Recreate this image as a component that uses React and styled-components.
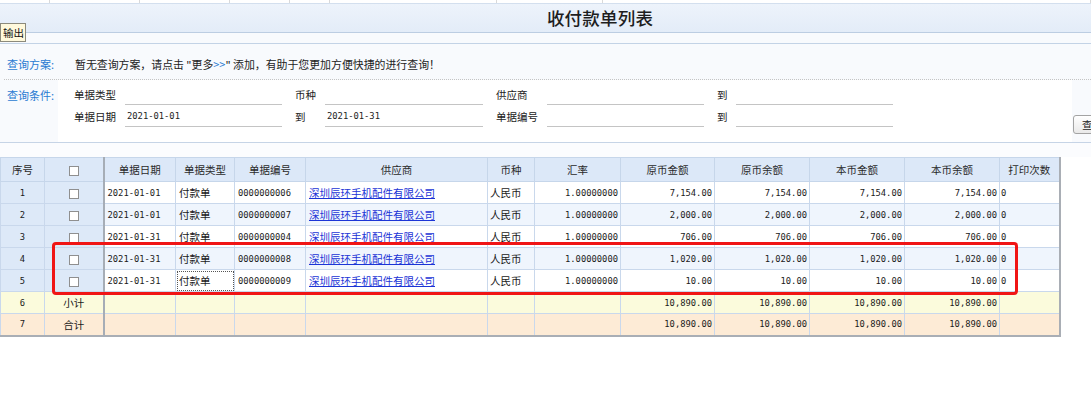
import React from "react";
import styled, { createGlobalStyle } from "styled-components";

const CJK = `"Noto Sans CJK SC", "Noto Sans", sans-serif`;
const MONO = `"DejaVu Sans Mono", "Liberation Mono", "Noto Sans CJK SC", monospace`;

const Global = createGlobalStyle`
  html, body { margin: 0; padding: 0; background: #fff; overflow: hidden; }
  body { font-family: ${CJK}; font-size: 10.5px; color: #222; }
  * { box-sizing: border-box; }
`;

const Page = styled.div`
  width: 1091px;
  height: 395px;
  overflow: hidden;
  background: #fff;
`;

const TabStrip = styled.div`
  display: flex;
  height: 4px;
  border-bottom: 1px solid #d3dfee;
`;

const TabStub = styled.div`
  width: ${(p) => p.$w}px;
  border-right: 1px solid #d9d9d9;
`;

const TitleBar = styled.div`
  height: 29px;
  background: linear-gradient(#edf3fb, #e3ecf8);
  border-bottom: 1px solid #bccde2;
  padding-left: 109px;
  text-align: center;
`;

const Title = styled.h1`
  margin: 0;
  font-size: 17.5px;
  font-weight: 500;
  line-height: 28px;
  color: #1e1e1e;
  letter-spacing: 0.2px;
`;

const Toolbar = styled.div`
  position: relative;
  height: 11px;
  background: #f8fafd;
  border-bottom: 1px solid #c3d3e6;
`;

const ExportButton = styled.button`
  position: absolute;
  left: 0;
  top: -10px;
  height: 19px;
  width: 26px;
  padding: 0 0 0 2px;
  font-family: ${CJK};
  font-size: 10.5px;
  line-height: 17px;
  text-align: left;
  color: #111;
  background: #fff9dc;
  border: 1px solid #8c8a7c;
  border-radius: 0;
`;

const QueryPanel = styled.div`
  background: #f8fafd;
  border-bottom: 1px solid #c6d4e6;
`;

const SchemeRow = styled.div`
  display: flex;
  height: 35px;
  padding-top: 13px;
  line-height: 14px;
`;

const SectionLabel = styled.div`
  width: 58px;
  flex: none;
  padding-left: 7px;
  font-size: 11px;
  color: #2a7ad2;
  line-height: 14px;
`;

const Hint = styled.div`
  padding-left: 17px;
  font-size: 10.9px;
  color: #222;
`;

const Arrow = styled.span`
  color: #2a7ad2;
`;

const Dotted = styled.div`
  margin-left: 4px;
  border-top: 1px dotted #c4c4c4;
`;

const ConditionRow = styled.div`
  display: flex;
  height: 62px;
  ${SectionLabel} {
    padding-top: 8px;
  }
`;

const FormBox = styled.div`
  width: 1014px;
  flex: none;
  background: #fff;
  padding: 4px 0 0 16px;
`;

const FieldGrid = styled.div`
  display: grid;
  grid-template-columns: 51px 157px 43px 158px 64px 157px 32px 157px;
  grid-auto-rows: 21px;
  row-gap: 1px;
`;

const FieldLabel = styled.div`
  padding-left: ${(p) => (p.$indent ? 13 : 0)}px;
  line-height: 21px;
  color: #222;
  white-space: nowrap;
`;

const FieldInput = styled.div`
  border-bottom: 1px solid #c4c4c4;
  padding-left: 2px;
  font-family: ${MONO};
  font-size: 8.8px;
  line-height: 20px;
  color: #222;
`;

const ButtonSlot = styled.div`
  flex: 1;
  padding: 35px 0 0 1px;
`;

const QueryButton = styled.button`
  height: 19px;
  width: 52px;
  font-family: ${CJK};
  font-size: 10.5px;
  padding: 0 0 0 8px;
  text-align: left;
  color: #222;
  background: linear-gradient(#ffffff, #e9e9e9);
  border: 1px solid #a3a3a3;
  border-radius: 3px;
`;

const Gap = styled.div`
  height: 14px;
  background: #fbfcfe;
`;

const TableWrap = styled.div`
  position: relative;
  width: 1059px;
`;

const Grid = styled.table`
  width: 1059px;
  table-layout: fixed;
  border-collapse: collapse;
  border-right: 2px solid #a9aeb5;
  border-bottom: 2px solid #a9aeb5;
`;

const bgFor = (kind, frozen) => {
  if (kind === "sub") return "#fbfbdc";
  if (kind === "total") return "#fdebd6";
  if (frozen) return "#dde9f8";
  if (kind === "even") return "#eff5fd";
  return "#ffffff";
};

const Th = styled.th`
  height: 24px;
  padding: 0;
  font-weight: normal;
  font-size: 10.5px;
  color: #2a2a2a;
  background: #dce8f8;
  border: 1px solid #c6d6ea;
  border-right: ${(p) => (p.$divider ? "2px solid #a6adb6" : "1px solid #c6d6ea")};
  text-align: center;
  white-space: nowrap;
`;

const Td = styled.td`
  height: 22px;
  padding: 0 2px 0 ${(p) => (p.$align === "left" ? p.$pl ?? 3 : 2)}px;
  background: ${(p) => bgFor(p.$kind, p.$frozen)};
  border: 1px solid #c9d8ec;
  border-right: ${(p) => (p.$divider ? "2px solid #a6adb6" : "1px solid #c9d8ec")};
  text-align: ${(p) => p.$align || "left"};
  font-family: ${(p) => (p.$mono ? MONO : CJK)};
  font-size: ${(p) => (p.$mono ? "8.8px" : "10.5px")};
  color: #1a1a1a;
  white-space: nowrap;
  overflow: hidden;
  outline: ${(p) => (p.$focus ? "1px dotted #555" : "none")};
  outline-offset: -2px;
`;

const Box = styled.span`
  display: inline-block;
  width: 10px;
  height: 10px;
  vertical-align: middle;
  background: #fff;
  border: 1px solid #8f8f8f;
`;

const SupplierLink = styled.a`
  color: #1b34d6;
  text-decoration: underline;
  cursor: pointer;
`;

const Highlight = styled.div`
  position: absolute;
  left: 52px;
  top: 85px;
  width: 966px;
  height: 53px;
  border: 3px solid #f01515;
  border-radius: 4px;
  pointer-events: none;
`;

const tabs = [50, 90, 90, 60, 40, 167, 106, 488];

const columns = [
  { title: "序号", w: 44 },
  { title: "check", w: 59 },
  { title: "单据日期", w: 72 },
  { title: "单据类型", w: 59 },
  { title: "单据编号", w: 71 },
  { title: "供应商", w: 182 },
  { title: "币种", w: 47 },
  { title: "汇率", w: 86 },
  { title: "原币金额", w: 94 },
  { title: "原币余额", w: 95 },
  { title: "本币金额", w: 95 },
  { title: "本币余额", w: 95 },
  { title: "打印次数", w: 60 },
];

const rows = [
  { no: 1, date: "2021-01-01", code: "0000000006", amt: "7,154.00" },
  { no: 2, date: "2021-01-01", code: "0000000007", amt: "2,000.00" },
  { no: 3, date: "2021-01-31", code: "0000000004", amt: "706.00" },
  { no: 4, date: "2021-01-31", code: "0000000008", amt: "1,020.00" },
  { no: 5, date: "2021-01-31", code: "0000000009", amt: "10.00", focus: true },
];

const summaries = [
  { no: 6, label: "小计", kind: "sub" },
  { no: 7, label: "合计", kind: "total" },
];

export default function App() {
  return (
    <Page>
      <Global />
      <TabStrip>
        {tabs.map((w, i) => (
          <TabStub key={i} $w={w} />
        ))}
      </TabStrip>
      <TitleBar>
        <Title>收付款单列表</Title>
      </TitleBar>
      <Toolbar>
        <ExportButton>输出</ExportButton>
      </Toolbar>
      <QueryPanel>
        <SchemeRow>
          <SectionLabel>查询方案:</SectionLabel>
          <Hint>
            暂无查询方案，请点击 "更多<Arrow>&gt;&gt;</Arrow>" 添加，有助于您更加方便快捷的进行查询！
          </Hint>
        </SchemeRow>
        <Dotted />
        <ConditionRow>
          <SectionLabel>查询条件:</SectionLabel>
          <FormBox>
            <FieldGrid>
              <FieldLabel>单据类型</FieldLabel>
              <FieldInput />
              <FieldLabel $indent>币种</FieldLabel>
              <FieldInput />
              <FieldLabel $indent>供应商</FieldLabel>
              <FieldInput />
              <FieldLabel $indent>到</FieldLabel>
              <FieldInput />
              <FieldLabel>单据日期</FieldLabel>
              <FieldInput>2021-01-01</FieldInput>
              <FieldLabel $indent>到</FieldLabel>
              <FieldInput>2021-01-31</FieldInput>
              <FieldLabel $indent>单据编号</FieldLabel>
              <FieldInput />
              <FieldLabel $indent>到</FieldLabel>
              <FieldInput />
            </FieldGrid>
          </FormBox>
          <ButtonSlot>
            <QueryButton>查询</QueryButton>
          </ButtonSlot>
        </ConditionRow>
      </QueryPanel>
      <Gap />
      <TableWrap>
        <Grid>
          <colgroup>
            {columns.map((c, i) => (
              <col key={i} style={{ width: c.w }} />
            ))}
          </colgroup>
          <thead>
            <tr>
              {columns.map((c, i) => (
                <Th key={i} $divider={i === 1}>
                  {c.title === "check" ? <Box /> : c.title}
                </Th>
              ))}
            </tr>
          </thead>
          <tbody>
            {rows.map((r, idx) => {
              const kind = idx % 2 === 0 ? "odd" : "even";
              return (
                <tr key={r.no}>
                  <Td $kind={kind} $frozen $align="center" $mono>{r.no}</Td>
                  <Td $kind={kind} $frozen $divider $align="center"><Box /></Td>
                  <Td $kind={kind} $mono $align="left">{r.date}</Td>
                  <Td $kind={kind} $align="left" $focus={r.focus}>付款单</Td>
                  <Td $kind={kind} $mono $align="left">{r.code}</Td>
                  <Td $kind={kind} $align="left">
                    <SupplierLink>深圳辰环手机配件有限公司</SupplierLink>
                  </Td>
                  <Td $kind={kind} $align="left" $pl={2}>人民币</Td>
                  <Td $kind={kind} $mono $align="right">1.00000000</Td>
                  <Td $kind={kind} $mono $align="right">{r.amt}</Td>
                  <Td $kind={kind} $mono $align="right">{r.amt}</Td>
                  <Td $kind={kind} $mono $align="right">{r.amt}</Td>
                  <Td $kind={kind} $mono $align="right">{r.amt}</Td>
                  <Td $kind={kind} $mono $align="left" $pl={1}>0</Td>
                </tr>
              );
            })}
            {summaries.map((s) => (
              <tr key={s.no}>
                <Td $kind={s.kind} $align="center" $mono>{s.no}</Td>
                <Td $kind={s.kind} $divider $align="center">{s.label}</Td>
                <Td $kind={s.kind} />
                <Td $kind={s.kind} />
                <Td $kind={s.kind} />
                <Td $kind={s.kind} />
                <Td $kind={s.kind} />
                <Td $kind={s.kind} />
                <Td $kind={s.kind} $mono $align="right">10,890.00</Td>
                <Td $kind={s.kind} $mono $align="right">10,890.00</Td>
                <Td $kind={s.kind} $mono $align="right">10,890.00</Td>
                <Td $kind={s.kind} $mono $align="right">10,890.00</Td>
                <Td $kind={s.kind} />
              </tr>
            ))}
          </tbody>
        </Grid>
        <Highlight />
      </TableWrap>
    </Page>
  );
}
